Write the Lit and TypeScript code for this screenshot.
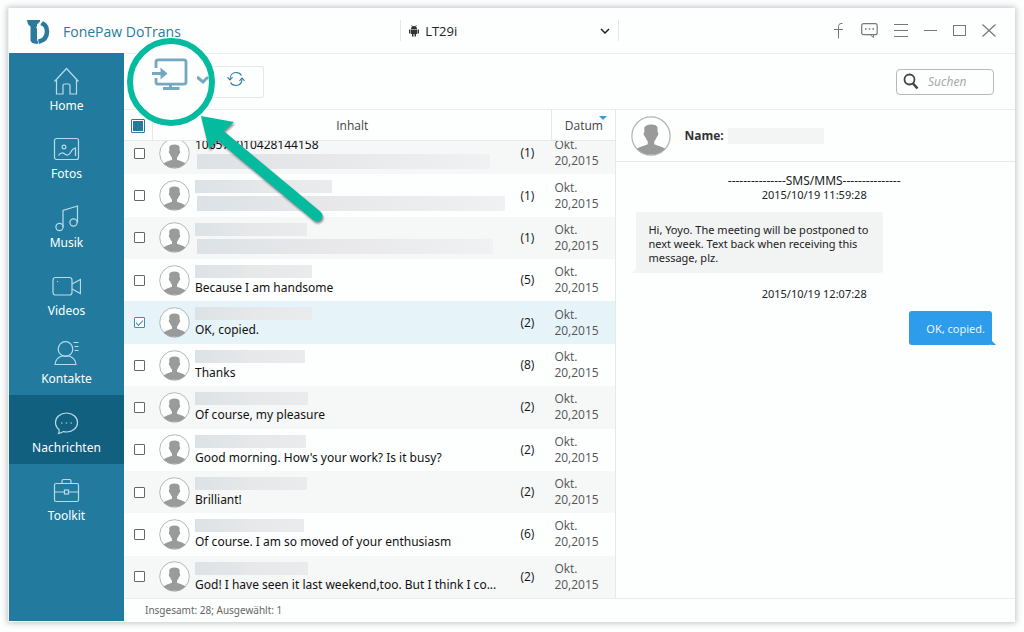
import { LitElement, html, css, svg, nothing } from "lit";
import { customElement, state } from "lit/decorators.js";
import { classMap } from "lit/directives/class-map.js";
import { styleMap } from "lit/directives/style-map.js";

interface Message {
  title?: string;
  nameWidth?: number;
  text?: string;
  textWidth?: number;
  count: number;
}

const messages: Message[] = [
  { title: "106575010428144158", textWidth: 293, count: 1 },
  { nameWidth: 137, textWidth: 308, count: 1 },
  { nameWidth: 112, textWidth: 296, count: 1 },
  { nameWidth: 117, text: "Because I am handsome", count: 5 },
  { nameWidth: 117, text: "OK, copied.", count: 2 },
  { nameWidth: 110, text: "Thanks", count: 8 },
  { nameWidth: 113, text: "Of course, my pleasure", count: 2 },
  { nameWidth: 111, text: "Good morning. How's your work? Is it busy?", count: 2 },
  { nameWidth: 112, text: "Brilliant!", count: 2 },
  { nameWidth: 109, text: "Of course. I am so moved of your enthusiasm", count: 6 },
  { nameWidth: 113, text: "God! I have seen it last weekend,too. But I think I co...", count: 2 },
];

const navItems = [
  {
    label: "Home",
    icon: svg`<path d="M2.500 15.500L14.500 2.500l12 13M4.500 14v14h6.500V19.500q0-1.500 1.500-1.500h4q1.500 0 1.500 1.500V28h6.500V14"/>`,
  },
  {
    label: "Fotos",
    icon: svg`<rect x="2.500" y="4.500" width="24" height="21" rx="2"/><circle cx="12" cy="13" r="1.900"/><path d="M6.500 21.500c3-4 5-2.500 7-1s4 0 5-2 2.500-4 5-4.500v8"/>`,
  },
  {
    label: "Musik",
    icon: svg`<circle cx="7.500" cy="24" r="3.600"/><circle cx="21.500" cy="19.500" r="3.600"/><path d="M11 24V7.500L25.500 3v16.500"/>`,
  },
  {
    label: "Videos",
    icon: svg`<rect x="1" y="6.500" width="19" height="17.500" rx="2.500"/><path d="M20 13l8.500-4.500v14L20 18M5 10.500h1"/>`,
  },
  {
    label: "Kontakte",
    icon: svg`<circle cx="13.500" cy="10" r="7.300"/><path d="M3 25.500c.500-4.500 3.500-7.500 7-8.500h7c3.500 1 6.500 4 7 8.500zM21.500 3.500h5M22.500 7.500h4M22.500 11.500h4"/>`,
  },
  {
    label: "Nachrichten",
    icon: svg`<path d="M6.500 25.500c.800-1 .800-2.500.500-4C4.500 19.500 3.500 17 3.500 14.500 3.500 9 8.500 5 14.500 5s11 4 11 9.500-5 9.500-11 9.500c-1 0-2-.200-3-.400-1.500 1-3 1.700-5 1.900z"/><path d="M9 15h1.500M13.700 15h1.500M18.500 15H20"/>`,
  },
  {
    label: "Toolkit",
    icon: svg`<rect x="2.500" y="7.500" width="24" height="18" rx="1.500"/><path d="M10 7.500V5q0-1.500 1.500-1.500h6Q19 3.500 19 5v2.500M2.500 16H12.500M16.500 16h10"/><rect x="12.500" y="14" width="4" height="4"/>`,
  },
];

@customElement("user-avatar")
export class UserAvatar extends LitElement {
  static styles = css`
    :host {
      display: block;
    }
    .picture {
      display: block;
      width: 100%;
    }
  `;

  render() {
    return html`<svg class="picture" viewBox="0 0 32 32" aria-hidden="true">
      <circle cx="16" cy="16" r="15.300" fill="#fdfefe" stroke="#b4b4b4" stroke-width="1" />
      <path
        fill="#9a9a9a"
        d="M10.600 9.200c.500-1.400 2.400-2.500 5.400-2.500s4.900.900 5.200 2.500l.100 3.600c1 .500.700 2.900-.700 3.900-.500 1.500-1.300 2.800-2 3.500v2.300c2.500 1.300 6.400 1.700 8.600 3.700A15 15 0 0 1 16 30.800a15 15 0 0 1-11.200-4.600c2.200-2 6.100-2.400 8.600-3.700v-2.300c-.700-.700-1.500-2-2-3.500-1.400-1-1.700-3.400-.700-3.900z"
      />
    </svg>`;
  }
}

@customElement("app-root")
export class AppRoot extends LitElement {
  static styles = css`
    :host {
      display: block;
      box-sizing: border-box;
      height: 100vh;
      padding: 8px 9px 10px 8px;
      background: #fdfefe;
      color: #222;
      font: 12px/16px "Open Sans", "Noto Sans", sans-serif;
    }
    *,
    *::before {
      box-sizing: border-box;
    }
    button {
      padding: 0;
      border: 0;
      background: none;
      color: inherit;
      font: inherit;
    }
    svg {
      display: block;
      fill: none;
      stroke: currentColor;
    }
    .window {
      display: grid;
      grid-template: 45px minmax(0, 1fr) / 115px minmax(0, 1fr);
      height: 100%;
      border-left: 1px solid #f0f3f4;
      background: #fdfefe;
      box-shadow: 0 0 6px 1px rgba(60, 70, 80, 0.32);
    }
    .titlebar {
      grid-column: 1 / -1;
      display: grid;
      grid-template-columns: minmax(0, 43fr) 219px minmax(0, 44fr);
      align-items: center;
      padding: 0 12px 0 16px;
    }
    .brand {
      display: flex;
      align-items: center;
      gap: 12px;
      margin: 0;
      padding-top: 3px;
      color: #2b7a9d;
      font-size: 14px;
      font-weight: 400;
      line-height: 20px;
      white-space: nowrap;
    }
    .device {
      display: grid;
      grid-template-columns: 10px 1fr 10px;
      align-items: center;
      gap: 6px;
      height: 21px;
      padding: 0 8px;
      border: solid #e4e6e7;
      border-width: 0 1px;
      font-size: 13px;
    }
    .device-select {
      grid-area: 1 / 2 / 2 / 4;
      appearance: none;
      padding: 0;
      border: 0;
      background: none;
      color: #222;
      font: inherit;
    }
    .device-chevron {
      grid-area: 1 / 3;
      pointer-events: none;
    }
    .window-tools {
      display: flex;
      justify-content: flex-end;
      color: #777;
    }
    .tool {
      display: grid;
      place-items: center;
      width: 31px;
      height: 24px;
    }
    .tool.narrow {
      width: 29px;
    }
    .sidebar {
      display: grid;
      grid-template-rows: repeat(7, minmax(0, 10fr)) minmax(0, 13fr);
      margin-bottom: 1px;
      background: #227b9e;
      color: #fff;
      font-family: "Noto Sans", sans-serif;
    }
    .nav-item {
      display: flex;
      flex-direction: column;
      align-items: center;
      justify-content: center;
      gap: 3px;
      padding-top: 5px;
      color: inherit;
      text-decoration: none;
    }
    .nav-item.active {
      background: #12607f;
    }
    .nav-icon {
      color: #b9dbe8;
    }
    .main {
      display: grid;
      grid-template-rows: 57px minmax(0, 1fr) 24px;
      min-width: 0;
    }
    .toolbar {
      position: relative;
      display: flex;
      align-items: center;
      justify-content: space-between;
      padding: 0 21px 0 25px;
      border: solid #ebeded;
      border-width: 1px 0;
    }
    .actions {
      display: flex;
      align-items: center;
      color: #5b9bb8;
    }
    .action {
      padding-bottom: 14px;
    }
    .action.magnified {
      position: relative;
      z-index: 1;
      color: #72a9c1;
      filter: blur(0.6px);
    }
    .action.more {
      padding: 0 0 4px 8px;
    }
    .action.refresh {
      display: grid;
      place-items: center;
      width: 55px;
      height: 32px;
      padding: 0 2px 6px 0;
      border: 1px solid #e5e7e8;
      border-radius: 2px;
      color: #2b7a9d;
    }
    .highlight {
      position: absolute;
      z-index: 0;
      left: 1px;
      top: -18px;
      overflow: visible;
      pointer-events: none;
    }
    .pointer {
      position: absolute;
      z-index: 3;
      left: 73px;
      top: 57px;
      pointer-events: none;
      filter: drop-shadow(1px 2px 1px rgba(0, 0, 0, 0.45));
    }
    .search {
      display: flex;
      align-items: center;
      gap: 9px;
      width: 98px;
      height: 26px;
      padding: 0 6px;
      border: 1px solid #b9b9b9;
      border-radius: 4px;
      color: #444;
    }
    .search-field {
      flex: 1;
      min-width: 0;
      padding: 0;
      border: 0;
      outline: 0;
      background: none;
      font: italic 12px/16px "Noto Sans", sans-serif;
    }
    .search-field::placeholder {
      color: #aaa;
      opacity: 1;
    }
    .panes {
      display: grid;
      grid-template-columns: minmax(0, 21fr) minmax(0, 17fr);
    }
    .messages {
      display: flex;
      flex-direction: column;
      min-height: 0;
      border-right: 1px solid #e6e8e9;
    }
    .messages-head {
      display: block;
    }
    .head-row,
    .row {
      display: grid;
      align-items: center;
    }
    .head-row {
      grid-template-columns: 28px minmax(0, 1fr) 64px;
      height: 31px;
      border-bottom: 1px solid #e6e8e9;
    }
    .head-cell {
      display: grid;
      place-content: center;
      height: 100%;
      padding: 1px 0 0;
      color: #444;
      font-weight: 400;
    }
    .head-cell + .head-cell {
      border-left: 1px solid #e6e8e9;
    }
    .sortable {
      position: relative;
    }
    .sort-mark {
      position: absolute;
      right: 8px;
      top: 6px;
      border: solid transparent;
      border-width: 4px 4px 0;
      border-top-color: #2d9ceb;
    }
    .messages-body {
      display: flex;
      flex: 1;
      flex-direction: column;
      justify-content: flex-end;
      min-height: 0;
      overflow: hidden;
    }
    .row {
      flex: 0 0 calc((100% + 9px) / 11);
      grid-template-columns: 35px 31px minmax(0, 1fr) 34px 61px;
    }
    .row:nth-child(odd) {
      background: #f6f7f7;
    }
    .row.selected {
      background: #e6f4fa;
    }
    .cell {
      padding: 0;
    }
    .cell.tick {
      padding-left: 10px;
    }
    .cell.content {
      align-self: start;
      padding: 6px 8px 0 5px;
      color: #111;
      font-family: "Noto Sans", sans-serif;
      white-space: nowrap;
    }
    .cell.count {
      color: #111;
    }
    .cell.date {
      padding-right: 12px;
      color: #555;
    }
    .check {
      appearance: none;
      display: grid;
      place-content: center;
      width: 11px;
      height: 11px;
      margin: 0;
      border: 1px solid #666;
      border-radius: 1px;
      background: #fff;
    }
    .check:checked {
      border-color: #3a8fb3;
    }
    .check:checked::before {
      content: "";
      width: 7px;
      height: 4px;
      border: solid #3a8fb3;
      border-width: 0 0 1px 1px;
      transform: translateY(-1px) rotate(-45deg);
    }
    .check.all {
      width: 14px;
      height: 14px;
      border-color: #2b7a9d;
    }
    .check.all::before {
      content: "";
      width: 10px;
      height: 10px;
      background: #227b9e;
    }
    .redacted {
      max-width: 100%;
      height: 13px;
      background: linear-gradient(90deg, #dce2e6, #e6e8e9 50%, #ebebed);
    }
    .redacted.second {
      height: 15px;
      margin: 3px 0 0 2px;
      background: linear-gradient(90deg, #dce2e6, #e8e8ea 45%, #f0f1f2);
    }
    .line {
      margin-top: 2px;
    }
    .line.title {
      height: 13px;
      margin: 0;
      line-height: 13px;
    }
    .thread {
      display: flex;
      flex-direction: column;
      min-width: 0;
    }
    .contact {
      display: flex;
      align-items: center;
      gap: 4px;
      height: 52px;
      padding-left: 15px;
      border-bottom: 1px solid #e6e8e9;
    }
    .contact-avatar {
      width: 40px;
      margin-right: 9px;
    }
    .contact-label {
      color: #333;
      font-weight: 700;
    }
    .contact-name {
      width: 96px;
      height: 16px;
      background: #f3f4f4;
    }
    .conversation {
      display: flex;
      flex-direction: column;
      padding: 12px 23px 0 20px;
      font: 11px/14px "Noto Sans", sans-serif;
    }
    .stamp {
      margin: 0;
      text-align: center;
    }
    .stamp.kind {
      font-size: 12px;
    }
    .bubble {
      position: relative;
      margin: 10px 0 14px;
      padding: 11px 8px 8px 12px;
      border-radius: 3px;
    }
    .bubble.received {
      align-self: flex-start;
      max-width: 247px;
      background: #f2f3f3;
    }
    .bubble.sent {
      align-self: flex-end;
      padding: 11px 7px 9px 17px;
      background: #2d9ceb;
      color: #e9f5fd;
    }
    .bubble::before {
      content: "";
      position: absolute;
      bottom: 0;
      border: solid transparent;
    }
    .bubble.received::before {
      left: -4px;
      border-width: 0 0 5px 5px;
      border-bottom-color: #f2f3f3;
    }
    .bubble.sent::before {
      right: -4px;
      border-width: 0 5px 5px 0;
      border-bottom-color: #2d9ceb;
    }
    .statusbar {
      padding: 3px 21px;
      border-top: 1px solid #ebeded;
      color: #666;
      font: 10px/16px "Noto Sans", sans-serif;
    }
  `;

  @state() private selected = new Set<number>([4]);

  private toggle(index: number) {
    const next = new Set(this.selected);
    next.has(index) ? next.delete(index) : next.add(index);
    this.selected = next;
  }

  private renderTitlebar() {
    return html`<header class="titlebar">
      <h1 class="brand">
        <svg width="26" height="26" viewBox="0 0 26 26" aria-hidden="true">
          <path fill="#2b7a9d" stroke="none" d="M2 1h13v1.500L12 5.500V21l1.500 3-1.500 1q-6-.500-6.500-3.500V7.500Q2.500 6 2 1z" />
          <path stroke="#2b7a9d" stroke-width="4.500" d="M16 4c4 1 6 4.500 6 8.500 0 5.500-3 9-8.500 10.300" />
          <path stroke="#fdfefe" stroke-width="1.200" d="M11.500 9L18 1" />
        </svg>
        FonePaw DoTrans
      </h1>
      <div class="device">
        <svg width="10" height="12" viewBox="0 0 10 12" aria-hidden="true">
          <path fill="#333" stroke="none" d="M2 4a3 3 0 0 1 6 0zM2 4.500h6V9H7v2.500H5.500V9h-1v2.500H3V9H2zM0 4.500h1.500v4H0zM8.500 4.500H10v4H8.500z" />
          <path stroke="#333" stroke-width=".600" d="M2.500 0l1 1.500M7.500 0l-1 1.500" />
        </svg>
        <select class="device-select" aria-label="Gerät">
          <option>LT29i</option>
        </select>
        <svg class="device-chevron" width="10" height="6" viewBox="0 0 10 6" stroke-width="1.500" aria-hidden="true"><path d="M1 1l4 4 4-4" /></svg>
      </div>
      <div class="window-tools">
        <button class="tool" aria-label="Facebook">
          <svg width="10" height="16" viewBox="0 0 10 16"><path d="M4.500 15.500v-12q0-3 2.500-3h1.500M0 6.500h9" /></svg>
        </button>
        <button class="tool" aria-label="Feedback">
          <svg width="17" height="15" viewBox="0 0 17 15">
            <rect x=".700" y=".700" width="15.500" height="11" rx="2" stroke-width="1.200" />
            <path d="M9.500 12l3 2.500V12" /><path stroke-width="1.600" d="M4 6h1.600M7.700 6h1.600M11.400 6H13" />
          </svg>
        </button>
        <button class="tool" aria-label="Menü">
          <svg width="14" height="13" viewBox="0 0 14 13"><path d="M0 .500h14M0 6.500h14M0 12.500h14" /></svg>
        </button>
        <button class="tool narrow" aria-label="Minimieren">
          <svg width="13" height="3" viewBox="0 0 13 3"><path d="M0 1.500h13" /></svg>
        </button>
        <button class="tool narrow" aria-label="Maximieren">
          <svg width="13" height="11" viewBox="0 0 13 11"><rect x=".500" y=".500" width="12" height="10" /></svg>
        </button>
        <button class="tool narrow" aria-label="Schließen">
          <svg width="14" height="13" viewBox="0 0 14 13" stroke-width="1.200"><path d="M.500.500l13 12M13.500.500l-13 12" /></svg>
        </button>
      </div>
    </header>`;
  }

  private renderToolbar() {
    return html`<div class="toolbar">
      <svg class="highlight" width="92" height="92" viewBox="0 0 92 92" aria-hidden="true">
        <circle cx="46" cy="46" r="41" fill="#fdfefe" stroke="#04ba9f" stroke-width="6" />
      </svg>
      <div class="actions">
        <button class="action magnified" aria-label="Auf PC exportieren">
          <svg width="40" height="36" viewBox="0 0 40 36" stroke-width="2.800">
            <path d="M7 11V5q0-2.200 2.200-2.200h25.600Q37 2.800 37 5v20q0 2.200-2.200 2.200H9.200Q7 27.200 7 25v-4" />
            <path d="M3 16.500h10" stroke-width="3" /><path d="M11.500 10.500l7 6-7 6z" fill="currentColor" stroke="none" />
            <path d="M21.500 28v4M14 31.500h16.500" />
          </svg>
        </button>
        <button class="action magnified more" aria-label="Weitere Optionen">
          <svg width="12" height="12" viewBox="0 0 12 12" stroke-width="3"><path d="M0 3l6 5 5-5" /></svg>
        </button>
        <button class="action refresh" aria-label="Aktualisieren">
          <svg width="18" height="16" viewBox="0 0 18 16" stroke-width="1.100">
            <path d="M3 8.500C3 4 5.500 1.500 9 1.500c2.500 0 4.500 1.200 5.500 3M15 7.500c0 4.500-2.500 7-6 7-2.500 0-4.500-1.200-5.500-3" />
            <path d="M.500 6.200L3 9l2.500-2.800M12.500 9.800L15 7l2.500 2.800" />
          </svg>
        </button>
      </div>
      <label class="search">
        <svg width="16" height="17" viewBox="0 0 16 17" aria-hidden="true">
          <circle cx="6.500" cy="6.500" r="5" stroke-width="1.800" /><path d="M10 10.500l4.500 5" stroke-width="2.600" />
        </svg>
        <input class="search-field" type="search" placeholder="Suchen" aria-label="Suchen" />
      </label>
      <svg class="pointer" width="132" height="116" viewBox="0 0 132 116" aria-hidden="true">
        <path d="M18 20L120 105" stroke="#04ba9f" stroke-width="11" stroke-linecap="round" />
        <path d="M4 5l33 6-9 8-13 16-3 3z" fill="#04ba9f" stroke="none" />
      </svg>
    </div>`;
  }

  private renderRow(message: Message, index: number) {
    const checked = this.selected.has(index);
    return html`<tr class=${classMap({ row: true, selected: checked })}>
      <td class="cell tick">
        <input class="check" type="checkbox" aria-label="Nachricht auswählen" .checked=${checked} @change=${() => this.toggle(index)} />
      </td>
      <td class="cell"><user-avatar></user-avatar></td>
      <td class="cell content">
        ${message.title
          ? html`<div class="line title">${message.title}</div>`
          : html`<div class="redacted" style=${styleMap({ width: `${message.nameWidth}px` })}></div>`}
        ${message.text ? html`<div class="line">${message.text}</div>` : nothing}
        ${message.textWidth
          ? html`<div class="redacted second" style=${styleMap({ width: `${message.textWidth}px` })}></div>`
          : nothing}
      </td>
      <td class="cell count">(${message.count})</td>
      <td class="cell date">Okt. 20,2015</td>
    </tr>`;
  }

  render() {
    return html`<div class="window">
      ${this.renderTitlebar()}
      <nav class="sidebar">
        ${navItems.map(
          (item) => html`<a class=${classMap({ "nav-item": true, active: item.label === "Nachrichten" })} href="#">
            <svg class="nav-icon" width="29" height="29" viewBox="0 0 29 29" stroke-width="1.200" aria-hidden="true">${item.icon}</svg>
            <span>${item.label}</span>
          </a>`
        )}
      </nav>
      <main class="main">
        ${this.renderToolbar()}
        <div class="panes">
          <table class="messages">
            <thead class="messages-head">
              <tr class="head-row">
                <th class="head-cell"><input class="check all" type="checkbox" aria-label="Alle auswählen" /></th>
                <th class="head-cell">Inhalt</th>
                <th class="head-cell sortable">Datum<span class="sort-mark"></span></th>
              </tr>
            </thead>
            <tbody class="messages-body">
              ${messages.map((message, index) => this.renderRow(message, index))}
            </tbody>
          </table>
          <section class="thread">
            <div class="contact">
              <user-avatar class="contact-avatar"></user-avatar>
              <span class="contact-label">Name:</span>
              <span class="contact-name"></span>
            </div>
            <div class="conversation">
              <p class="stamp kind">---------------SMS/MMS---------------</p>
              <p class="stamp">2015/10/19 11:59:28</p>
              <div class="bubble received">Hi, Yoyo. The meeting will be postponed to next week. Text back when receiving this message, plz.</div>
              <p class="stamp">2015/10/19 12:07:28</p>
              <div class="bubble sent">OK, copied.</div>
            </div>
          </section>
        </div>
        <footer class="statusbar">Insgesamt: 28; Ausgewählt: 1</footer>
      </main>
    </div>`;
  }
}
